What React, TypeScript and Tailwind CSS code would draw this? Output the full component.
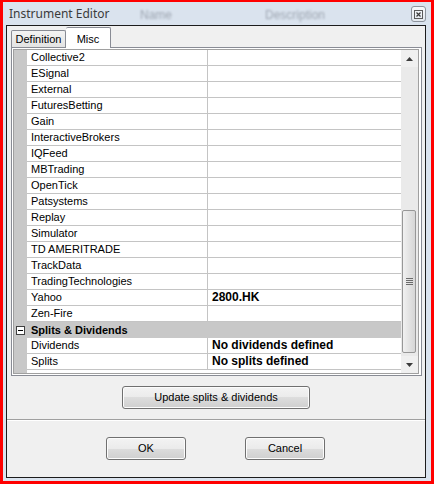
import React from 'react';

const FONT = { fontFamily: '"Liberation Sans", Arial, sans-serif' };

const PROVIDERS: { name: string; value?: string }[] = [
  { name: 'Collective2' },
  { name: 'ESignal' },
  { name: 'External' },
  { name: 'FuturesBetting' },
  { name: 'Gain' },
  { name: 'InteractiveBrokers' },
  { name: 'IQFeed' },
  { name: 'MBTrading' },
  { name: 'OpenTick' },
  { name: 'Patsystems' },
  { name: 'Replay' },
  { name: 'Simulator' },
  { name: 'TD AMERITRADE' },
  { name: 'TrackData' },
  { name: 'TradingTechnologies' },
  { name: 'Yahoo', value: '2800.HK' },
  { name: 'Zen-Fire' },
];

const SPLITS = [
  { name: 'Dividends', value: 'No dividends defined' },
  { name: 'Splits', value: 'No splits defined' },
];

function Row({ name, value }: { name: string; value?: string }) {
  return (
    <div className="flex h-[16px]">
      <div className="w-[13px] bg-[#c8c8c8]" />
      <div className="w-[181px] border-r border-b border-[#c4c4c4] pl-[4px] text-[11px] leading-[15px] text-black">
        {name}
      </div>
      <div className="flex-1 border-b border-[#c4c4c4] pl-[4px] text-[12px] font-bold leading-[15px] text-black">
        {value}
      </div>
    </div>
  );
}

function Btn({ label, className }: { label: string; className: string }) {
  return (
    <div
      className={`flex items-center justify-center rounded-[3px] border border-[#707070] bg-[linear-gradient(#f3f3f3_0%,#ebebeb_50%,#dddddd_50%,#cfcfcf_100%)] text-[11px] text-black shadow-[inset_0_0_0_1px_#fcfcfc] ${className}`}
    >
      {label}
    </div>
  );
}

function Scrollbar() {
  return (
    <div className="flex w-[17px] flex-col bg-[#ececec]">
      <div className="flex h-[17px] items-center justify-center bg-[#f0f0f0]">
        <svg width="7" height="4" viewBox="0 0 7 4">
          <path d="M3.5 0 L7 4 L0 4 Z" fill="#3c3c3c" />
        </svg>
      </div>
      <div className="flex flex-1 flex-col bg-[#eaeaea] pl-[1px] pr-[2px]">
        <div className="h-[143px]" />
        <div className="flex h-[143px] items-center justify-center rounded-[2px] border border-[#979797] bg-[linear-gradient(90deg,#f1f1f1_0%,#e3e3e3_50%,#d6d6d6_100%)]">
          <div className="flex flex-col gap-[1px]">
            <div className="h-[1px] w-[7px] bg-[#6b6b6b]" />
            <div className="h-[1px] w-[7px] bg-[#6b6b6b]" />
            <div className="h-[1px] w-[7px] bg-[#6b6b6b]" />
            <div className="h-[1px] w-[7px] bg-[#6b6b6b]" />
          </div>
        </div>
      </div>
      <div className="flex h-[17px] items-center justify-center bg-[#f0f0f0]">
        <svg width="7" height="4" viewBox="0 0 7 4">
          <path d="M0 0 L7 0 L3.5 4 Z" fill="#3c3c3c" />
        </svg>
      </div>
    </div>
  );
}

export default function App() {
  return (
    <div className="h-[484px] w-[434px] bg-[#ff0000] px-[3px] pt-[2px] pb-[3px]" style={FONT}>
      <div className="flex h-full flex-col bg-[#dae3ee] pl-[3px] pr-[5px] pb-[3px]">
        {/* Title bar */}
        <div className="relative flex h-[23px] items-center">
          <span className="pl-[3px] text-[12px] text-[#3b3b3b]" style={{ fontFamily: '"Segoe UI", "Noto Sans", sans-serif' }}>
            Instrument Editor
          </span>
          <span className="absolute left-[134px] top-[4px] text-[12px] text-[#9ea6b1] blur-[1.2px]">Name</span>
          <span className="absolute left-[259px] top-[4px] text-[12px] text-[#9ea6b1] blur-[1.2px]">Description</span>
          <div className="absolute right-[0px] top-[4px] flex h-[16px] w-[15px] items-center justify-center rounded-[3px] border border-[#8d939c] bg-[linear-gradient(#f7f9fb,#e3e8ee)]">
            <svg width="9" height="9" viewBox="0 0 9 9">
              <rect x="0.5" y="0.5" width="8" height="8" fill="none" stroke="#5a5a5a" strokeWidth="1" />
              <path d="M2.5 2.5 L6.5 6.5 M6.5 2.5 L2.5 6.5" stroke="#3a3a3a" strokeWidth="1.2" />
            </svg>
          </div>
        </div>

        {/* Dialog body */}
        <div className="flex flex-1 flex-col border border-[#1c1c1c] bg-[#f0f0f0]">
          {/* Tabs */}
          <div className="relative z-10 flex h-[21px] items-end pl-[4px]">
            <div className="flex h-[17px] w-[55px] items-center justify-center rounded-t-[2px] border border-b-0 border-[#898c95] bg-[linear-gradient(#f3f3f3,#e3e3e3)] pt-[1px] text-[11px] text-black">
              Definition
            </div>
            <div className="-mb-px flex h-[21px] w-[45px] items-start justify-center rounded-t-[2px] border border-b-0 border-l-0 border-[#898c95] bg-white pt-[3px] text-[11px] text-black">
              Misc
            </div>
          </div>

          {/* Tab panel */}
          <div className="ml-[4px] h-[329px] w-[411px] border border-[#898c95] bg-white pl-[1px] pt-[1px]">
            <div className="flex h-[325px] w-[406px] border border-[#a0a0a0]">
              <div className="flex flex-1 flex-col">
                {PROVIDERS.map((p) => (
                  <Row key={p.name} name={p.name} value={p.value} />
                ))}
                <div className="flex h-[16px] items-center bg-[#c8c8c8]">
                  <div className="flex w-[13px] justify-center">
                    <svg width="9" height="9" viewBox="0 0 9 9">
                      <rect x="0.5" y="0.5" width="8" height="8" fill="#ffffff" stroke="#404040" strokeWidth="1" />
                      <path d="M2 4.5 H7" stroke="#000" strokeWidth="1" />
                    </svg>
                  </div>
                  <span className="pl-[4px] text-[11px] font-bold leading-[15px] text-black">Splits &amp; Dividends</span>
                </div>
                {SPLITS.map((s) => (
                  <Row key={s.name} name={s.name} value={s.value} />
                ))}
                <div className="flex flex-1">
                  <div className="w-[13px] bg-[#c8c8c8]" />
                </div>
              </div>
              <Scrollbar />
            </div>
          </div>

          <Btn label="Update splits & dividends" className="mx-auto mt-[10px] h-[23px] w-[188px]" />

          <div className="mt-[10px] border-t border-b border-t-[#a0a0a0] border-b-white" />

          <div className="mt-[16px] flex pl-[99px]">
            <Btn label="OK" className="h-[23px] w-[80px]" />
            <Btn label="Cancel" className="ml-[59px] h-[23px] w-[80px]" />
          </div>
        </div>
      </div>
    </div>
  );
}
